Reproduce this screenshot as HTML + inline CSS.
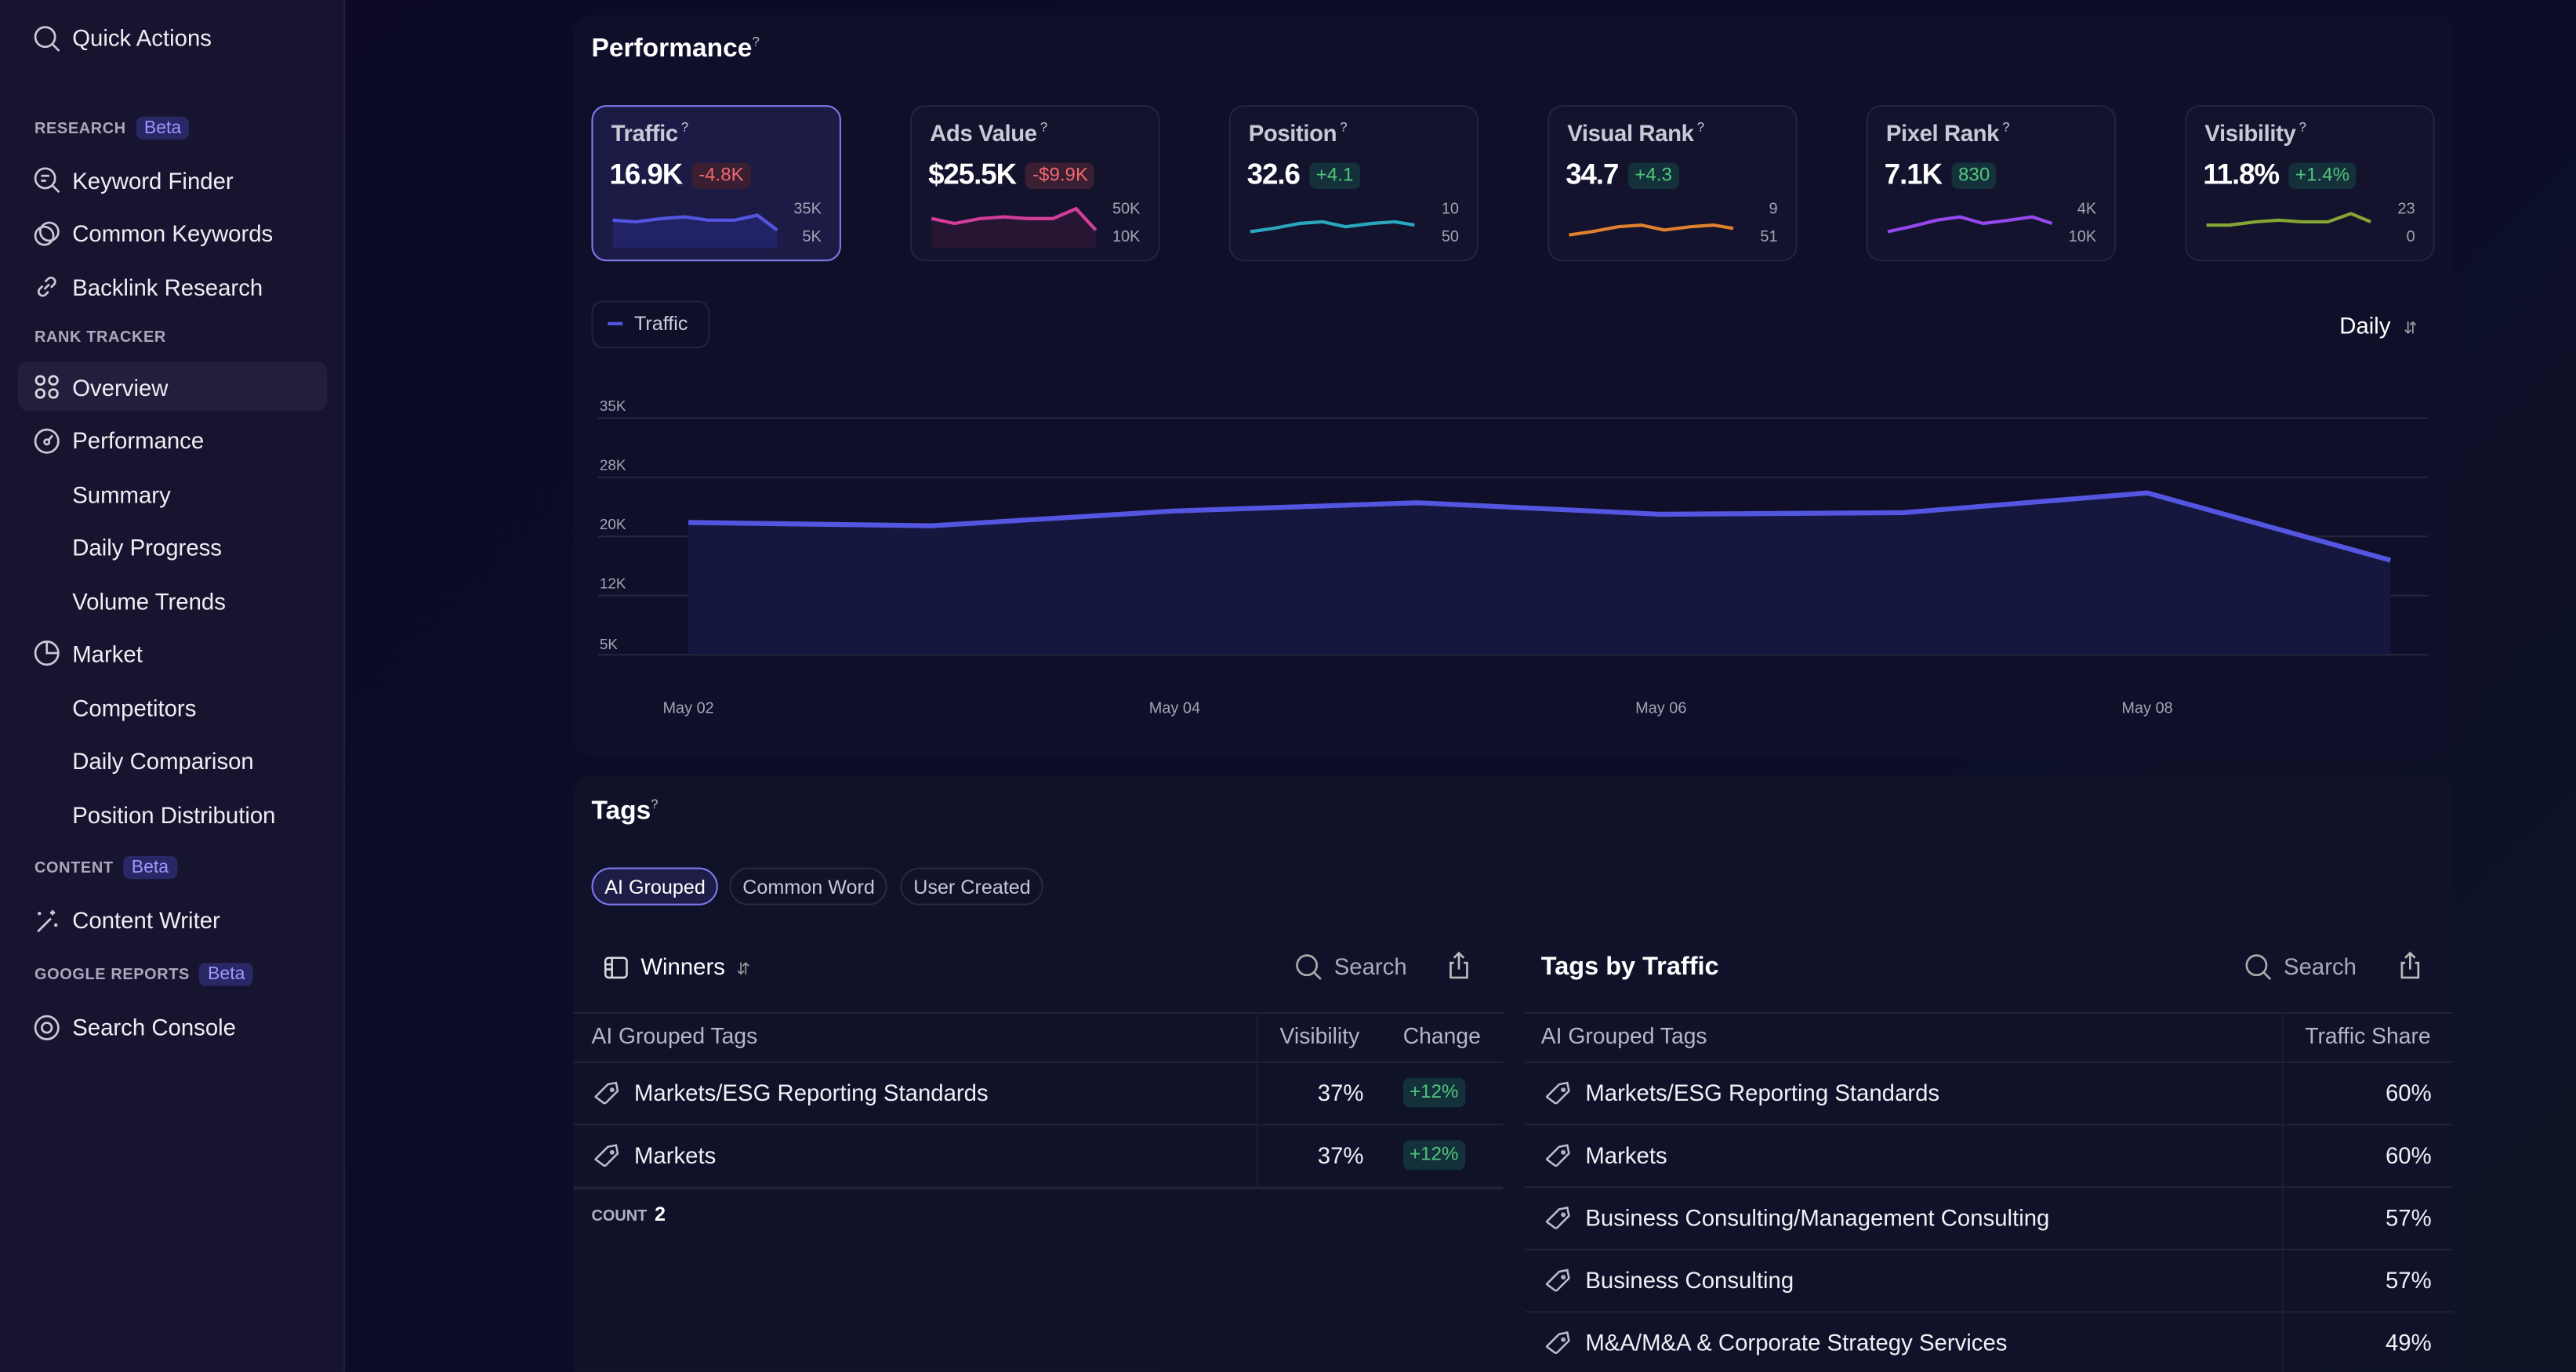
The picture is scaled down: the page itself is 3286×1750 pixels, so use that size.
<!DOCTYPE html>
<html><head><meta charset="utf-8">
<style>
*{box-sizing:border-box;margin:0;padding:0}
html,body{width:3286px;height:1750px;overflow:hidden;background:#0b0a22}
body{font-family:"Liberation Sans",sans-serif;color:#e8e8f0}
#s{position:absolute;left:0;top:0;width:1568px;height:835px;transform:scale(2.0957);transform-origin:0 0;background:linear-gradient(135deg,#0c0a26 0%,#0c0d28 60%,#0e1426 100%);overflow:hidden}
.a{position:absolute;white-space:nowrap}
#side{position:absolute;left:0;top:0;width:210px;height:835px;background:#17142f;border-right:1px solid #221f3a}
.ni{position:absolute;left:44px;font-size:14px;color:#eeeef4}
.ic{position:absolute;left:20px;width:17px;height:17px}
.sec{position:absolute;left:21px;font-size:9.5px;color:#a9a8bd;letter-spacing:.3px;font-weight:bold}
.beta{display:inline-block;margin-left:6px;padding:1px 5px;border-radius:4px;background:#2a2766;color:#9d97ff;font-size:11px;font-weight:normal;letter-spacing:0}
.card{position:absolute;left:349px;width:1144px;background:#100f2a;border-radius:12px}
.mc{position:absolute;top:64px;width:152px;height:95px;border:1px solid #24233f;border-radius:9px;background:#13132d}
.mc.sel{border-color:#7c79ec;background:#1c1b46}
.mt{position:absolute;left:11px;top:8px;font-size:14px;color:#c8c8d6;font-weight:bold;letter-spacing:-.2px}
.mt sup{font-size:8px;font-weight:normal;margin-left:2px}
.mv{position:absolute;left:10px;top:31px;font-size:17.5px;font-weight:bold;color:#fff;letter-spacing:-.5px}
.bd{display:inline-block;font-size:11.5px;font-weight:normal;padding:2px 4px;border-radius:4px;margin-left:6px;vertical-align:2px;letter-spacing:0}
.neg{background:#3a1e32;color:#f0686e}.pos{background:#14303a;color:#4fc77c}
.ax{position:absolute;right:11px;font-size:9.5px;color:#a3a3b5}
.gl{position:absolute;left:364px;width:1114px;height:1px;background:#26253d}
.yl{position:absolute;left:365px;font-size:9px;color:#a3a3b5}
.xl{position:absolute;top:426px;font-size:9.5px;color:#a3a3b5;transform:translateX(-50%)}
.pill{position:absolute;top:528px;height:23px;border:1px solid #2a2944;border-radius:12px;font-size:12px;color:#c6c6d4;padding:4px 7px}
.hl{position:absolute;height:1px;background:#20213a}
.th{position:absolute;font-size:13.5px;color:#b5b5c6}
.td{position:absolute;font-size:14px;color:#f0f0f6}
.chg{position:absolute;font-size:11.5px;color:#4fc77c;background:#14303a;border-radius:4px;padding:3px 4px}
</style></head><body>
<div id="s">
<div id="side">
 <svg class="ic" style="top:15px" viewBox="0 0 17 17" fill="none" stroke="#c9c9d6" stroke-width="1.3"><circle cx="7.5" cy="7.5" r="6"/><path d="M12 12l4 4"/></svg>
 <div class="ni" style="top:15px">Quick Actions</div>
 <div class="sec" style="top:71px">RESEARCH<span class="beta">Beta</span></div>
 <svg class="ic" style="top:101px" viewBox="0 0 17 17" fill="none" stroke="#c9c9d6" stroke-width="1.3"><circle cx="7.5" cy="7.5" r="6"/><path d="M12 12l4 4M5 6h5M5 9h3"/></svg>
 <div class="ni" style="top:102px">Keyword Finder</div>
 <svg class="ic" style="top:134px" viewBox="0 0 17 17" fill="none" stroke="#c9c9d6" stroke-width="1.3"><circle cx="7" cy="9.5" r="5.5"/><circle cx="10" cy="7" r="5.5"/></svg>
 <div class="ni" style="top:134px">Common Keywords</div>
 <svg class="ic" style="top:166px" viewBox="0 0 17 17" fill="none" stroke="#c9c9d6" stroke-width="1.3"><path d="M7 10l3-3M6 8L4 10a2.5 2.5 0 003.5 3.5L9.5 11.5M11 9l2-2A2.5 2.5 0 009.5 3.5L7.5 5.5"/></svg>
 <div class="ni" style="top:167px">Backlink Research</div>
 <div class="sec" style="top:200px">RANK TRACKER</div>
 <div style="position:absolute;left:11px;top:220px;width:188px;height:30px;border-radius:6px;background:#221f3d"></div>
 <svg class="ic" style="top:227px" viewBox="0 0 17 17" fill="none" stroke="#d9d9e4" stroke-width="1.3"><rect x="2" y="2" width="5" height="5" rx="2.3"/><rect x="10" y="2" width="5" height="5" rx="2.3"/><rect x="2" y="10" width="5" height="5" rx="2.3"/><rect x="10" y="10" width="5" height="5" rx="2.3"/></svg>
 <div class="ni" style="top:228px">Overview</div>
 <svg class="ic" style="top:260px" viewBox="0 0 17 17" fill="none" stroke="#c9c9d6" stroke-width="1.3"><circle cx="8.5" cy="8.5" r="7"/><circle cx="8.5" cy="9" r="1.5"/><path d="M9.5 8l2.5-3"/></svg>
 <div class="ni" style="top:260px">Performance</div>
 <div class="ni" style="top:293px">Summary</div>
 <div class="ni" style="top:325px">Daily Progress</div>
 <div class="ni" style="top:358px">Volume Trends</div>
 <svg class="ic" style="top:389px" viewBox="0 0 17 17" fill="none" stroke="#c9c9d6" stroke-width="1.3"><circle cx="8.5" cy="8.5" r="7"/><path d="M8.5 1.5v7h7"/></svg>
 <div class="ni" style="top:390px">Market</div>
 <div class="ni" style="top:423px">Competitors</div>
 <div class="ni" style="top:455px">Daily Comparison</div>
 <div class="ni" style="top:488px">Position Distribution</div>
 <div class="sec" style="top:521px">CONTENT<span class="beta">Beta</span></div>
 <svg class="ic" style="top:552px" viewBox="0 0 17 17" fill="none" stroke="#c9c9d6" stroke-width="1.3"><path d="M3 15l8-8M12 2v3M10.5 3.5h3M4 3v2M3 4h2M14 10v2M13 11h2"/></svg>
 <div class="ni" style="top:552px">Content Writer</div>
 <div class="sec" style="top:586px">GOOGLE REPORTS<span class="beta">Beta</span></div>
 <svg class="ic" style="top:617px" viewBox="0 0 17 17" fill="none" stroke="#c9c9d6" stroke-width="1.3"><circle cx="8.5" cy="8.5" r="7"/><circle cx="8.5" cy="8.5" r="3"/></svg>
 <div class="ni" style="top:617px">Search Console</div>
</div>

<div class="card" style="top:9px;height:451px"></div>
<div class="a" style="left:360px;top:21px;font-size:16px;font-weight:bold;color:#fff">Performance<sup style="font-size:8px;font-weight:normal;color:#bbb">?</sup></div>

<div class="mc sel" style="left:360px"><div class="mt">Traffic<sup>?</sup></div><div class="mv">16.9K<span class="bd neg">-4.8K</span></div>
<svg class="a" style="left:0;top:0" width="152" height="95"><path d="M12 69 L26 70 L42 68 L56 67 L70 69 L86 69 L100 66 L112 75 V86 H12Z" fill="#24236a" opacity=".9"/><path d="M12 69 L26 70 L42 68 L56 67 L70 69 L86 69 L100 66 L112 75" fill="none" stroke="#5455e0" stroke-width="2"/></svg>
<div class="ax" style="top:57px">35K</div><div class="ax" style="top:74px">5K</div></div>

<div class="mc" style="left:554px"><div class="mt">Ads Value<sup>?</sup></div><div class="mv">$25.5K<span class="bd neg">-$9.9K</span></div>
<svg class="a" style="left:0;top:0" width="152" height="95"><path d="M12 68 L26 71 L42 68 L56 67 L70 68 L86 68 L100 62 L112 75 V86 H12Z" fill="#261634"/><path d="M12 68 L26 71 L42 68 L56 67 L70 68 L86 68 L100 62 L112 75" fill="none" stroke="#d23d9c" stroke-width="2"/></svg>
<div class="ax" style="top:57px">50K</div><div class="ax" style="top:74px">10K</div></div>

<div class="mc" style="left:748px"><div class="mt">Position<sup>?</sup></div><div class="mv">32.6<span class="bd pos">+4.1</span></div>
<svg class="a" style="left:0;top:0" width="152" height="95"><path d="M12 76 L26 74 L42 71 L56 70 L70 73 L86 71 L100 70 L112 72" fill="none" stroke="#2aa6be" stroke-width="2"/></svg>
<div class="ax" style="top:57px">10</div><div class="ax" style="top:74px">50</div></div>

<div class="mc" style="left:942px"><div class="mt">Visual Rank<sup>?</sup></div><div class="mv">34.7<span class="bd pos">+4.3</span></div>
<svg class="a" style="left:0;top:0" width="152" height="95"><path d="M12 78 L26 76 L42 73 L56 72 L70 75 L86 73 L100 72 L112 74" fill="none" stroke="#e0802e" stroke-width="2"/></svg>
<div class="ax" style="top:57px">9</div><div class="ax" style="top:74px">51</div></div>

<div class="mc" style="left:1136px"><div class="mt">Pixel Rank<sup>?</sup></div><div class="mv">7.1K<span class="bd pos">830</span></div>
<svg class="a" style="left:0;top:0" width="152" height="95"><path d="M12 76 L26 73 L42 69 L56 67 L70 71 L86 69 L100 67 L112 71" fill="none" stroke="#9747ee" stroke-width="2"/></svg>
<div class="ax" style="top:57px">4K</div><div class="ax" style="top:74px">10K</div></div>

<div class="mc" style="left:1330px"><div class="mt">Visibility<sup>?</sup></div><div class="mv">11.8%<span class="bd pos">+1.4%</span></div>
<svg class="a" style="left:0;top:0" width="152" height="95"><path d="M12 72 L26 72 L42 70 L56 69 L70 70 L86 70 L100 65 L112 70" fill="none" stroke="#86a534" stroke-width="2"/></svg>
<div class="ax" style="top:57px">23</div><div class="ax" style="top:74px">0</div></div>

<div class="a" style="left:360px;top:183px;width:72px;height:29px;border:1px solid #23223d;border-radius:7px"></div>
<div class="a" style="left:370px;top:196px;width:9px;height:2px;background:#5455e0"></div>
<div class="a" style="left:386px;top:190px;font-size:12px;color:#cfcfdc">Traffic</div>
<div class="a" style="left:1424px;top:190px;font-size:14px;color:#fff">Daily <span style="font-size:10px;color:#999;margin-left:4px">&#8693;</span></div>

<div class="gl" style="top:254px"></div><div class="gl" style="top:290px"></div><div class="gl" style="top:326px"></div><div class="gl" style="top:362px"></div><div class="gl" style="top:398px"></div>
<div class="yl" style="top:242px">35K</div><div class="yl" style="top:278px">28K</div><div class="yl" style="top:314px">20K</div><div class="yl" style="top:350px">12K</div><div class="yl" style="top:387px">5K</div>
<svg class="a" style="left:0;top:0" width="1568" height="835"><path d="M419 318 L567 320 L715 311 L863 306 L1011 313 L1159 312 L1307 300 L1455 341 V398 H419Z" fill="#16173e"/><path d="M419 318 L567 320 L715 311 L863 306 L1011 313 L1159 312 L1307 300 L1455 341" fill="none" stroke="#5455e0" stroke-width="3"/></svg>
<div class="xl" style="left:419px">May 02</div><div class="xl" style="left:715px">May 04</div><div class="xl" style="left:1011px">May 06</div><div class="xl" style="left:1307px">May 08</div>

<div class="card" style="top:472px;height:380px;background:#0f1229"></div>
<div class="a" style="left:360px;top:485px;font-size:16px;font-weight:bold;color:#fff">Tags<sup style="font-size:8px;font-weight:normal;color:#bbb">?</sup></div>
<div class="pill" style="left:360px;border-color:#7c79ec;background:#1e1d48;color:#fff">AI Grouped</div>
<div class="pill" style="left:444px">Common Word</div>
<div class="pill" style="left:548px">User Created</div>

<svg class="a" style="left:367px;top:581px" width="16" height="16" viewBox="0 0 16 16" fill="none" stroke="#ddd" stroke-width="1.2"><rect x="1.5" y="2" width="13" height="12" rx="2"/><path d="M5.5 2v12M2 6h3M2 9h3"/></svg>
<div class="a" style="left:390px;top:580px;font-size:14px;color:#fff">Winners <span style="font-size:10px;color:#999;margin-left:3px">&#8693;</span></div>
<svg class="a" style="left:788px;top:580px" width="17" height="17" viewBox="0 0 17 17" fill="none" stroke="#aaa" stroke-width="1.3"><circle cx="7.5" cy="7.5" r="6"/><path d="M12 12l4 4"/></svg>
<div class="a" style="left:812px;top:580px;font-size:14px;color:#a9a9bb">Search</div>
<svg class="a" style="left:880px;top:579px" width="16" height="18" viewBox="0 0 16 18" fill="none" stroke="#bbb" stroke-width="1.3"><path d="M8 1v10M5 4l3-3 3 3M5 7H3v9h10V7h-2"/></svg>

<div class="a" style="left:938px;top:580px;font-size:15.5px;font-weight:bold;color:#fff">Tags by Traffic</div>
<svg class="a" style="left:1366px;top:580px" width="17" height="17" viewBox="0 0 17 17" fill="none" stroke="#aaa" stroke-width="1.3"><circle cx="7.5" cy="7.5" r="6"/><path d="M12 12l4 4"/></svg>
<div class="a" style="left:1390px;top:580px;font-size:14px;color:#a9a9bb">Search</div>
<svg class="a" style="left:1459px;top:579px" width="16" height="18" viewBox="0 0 16 18" fill="none" stroke="#bbb" stroke-width="1.3"><path d="M8 1v10M5 4l3-3 3 3M5 7H3v9h10V7h-2"/></svg>

<div class="hl" style="left:349px;width:566px;top:616px"></div>
<div class="hl" style="left:349px;width:566px;top:646px"></div>
<div class="hl" style="left:349px;width:566px;top:684px"></div>
<div class="hl" style="left:349px;width:566px;top:722px;height:2px"></div>
<div class="a" style="left:765px;top:616px;width:1px;height:106px;background:#1d1e36"></div>
<div class="th" style="left:360px;top:623px">AI Grouped Tags</div>
<div class="th" style="left:779px;top:623px">Visibility</div>
<div class="th" style="left:854px;top:623px">Change</div>
<div class="td" style="left:386px;top:657px">Markets/ESG Reporting Standards</div>
<div class="td" style="left:802px;top:657px">37%</div>
<div class="chg" style="left:854px;top:656px">+12%</div>
<div class="td" style="left:386px;top:695px">Markets</div>
<div class="td" style="left:802px;top:695px">37%</div>
<div class="chg" style="left:854px;top:694px">+12%</div>
<div class="a" style="left:360px;top:732px;font-size:9.5px;color:#b0b0c0;font-weight:bold">COUNT <span style="font-size:12px;color:#fff;margin-left:2px">2</span></div>

<div class="hl" style="left:928px;width:565px;top:616px"></div>
<div class="hl" style="left:928px;width:565px;top:646px"></div>
<div class="hl" style="left:928px;width:565px;top:684px"></div>
<div class="hl" style="left:928px;width:565px;top:722px"></div>
<div class="hl" style="left:928px;width:565px;top:760px"></div>
<div class="hl" style="left:928px;width:565px;top:798px"></div>
<div class="a" style="left:1389px;top:616px;width:1px;height:220px;background:#1d1e36"></div>
<div class="th" style="left:938px;top:623px">AI Grouped Tags</div>
<div class="th" style="left:1403px;top:623px">Traffic Share</div>
<div class="td" style="left:965px;top:657px">Markets/ESG Reporting Standards</div><div class="td" style="left:1452px;top:657px">60%</div>
<div class="td" style="left:965px;top:695px">Markets</div><div class="td" style="left:1452px;top:695px">60%</div>
<div class="td" style="left:965px;top:733px">Business Consulting/Management Consulting</div><div class="td" style="left:1452px;top:733px">57%</div>
<div class="td" style="left:965px;top:771px">Business Consulting</div><div class="td" style="left:1452px;top:771px">57%</div>
<div class="td" style="left:965px;top:809px">M&amp;A/M&amp;A &amp; Corporate Strategy Services</div><div class="td" style="left:1452px;top:809px">49%</div>

<svg class="a" style="left:0;top:0" width="1568" height="835" fill="none" stroke="#bdbdcc" stroke-width="1.2">
<defs><path id="t" d="M2 10 L9 3 L14 2 L15 7 L8 14 Q7 15 6 14 L2 11 Q1 10.5 2 10Z M11.5 5.5 a0.8 0.8 0 1 0 0.1 0"/></defs>
<use href="#t" x="361" y="657"/><use href="#t" x="361" y="695"/>
<use href="#t" x="940" y="657"/><use href="#t" x="940" y="695"/><use href="#t" x="940" y="733"/><use href="#t" x="940" y="771"/><use href="#t" x="940" y="809"/>
</svg>
</div>
</body></html>
